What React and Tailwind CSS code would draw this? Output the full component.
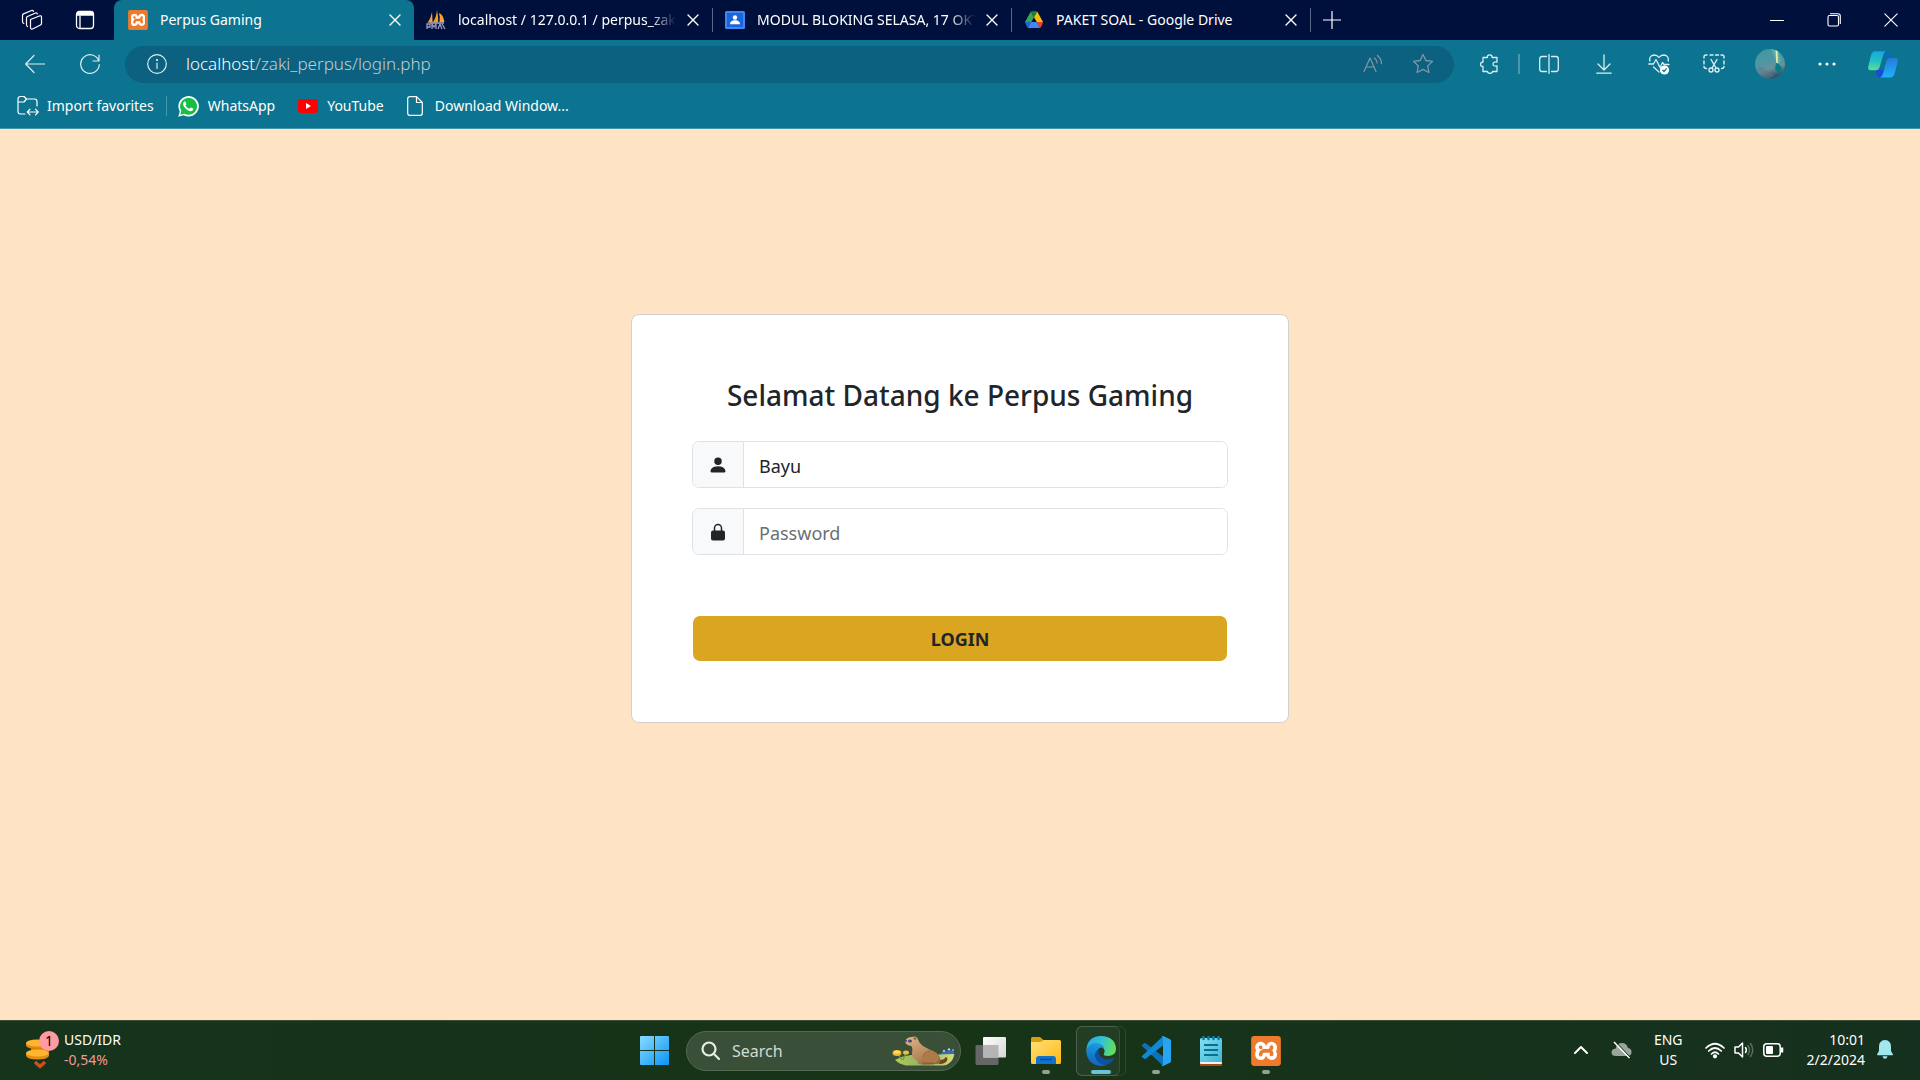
import React from 'react';
import { SiXampp } from 'react-icons/si';
import { BsPersonFill } from 'react-icons/bs';

function Line({ size = 20, w = 1, box = 20, children, className = '' }) {
  return (
    <svg
      width={size}
      height={size}
      viewBox={`0 0 ${box} ${box}`}
      fill="none"
      stroke="currentColor"
      strokeWidth={w}
      strokeLinecap="round"
      strokeLinejoin="round"
      className={className}
      aria-hidden="true"
    >
      {children}
    </svg>
  );
}

function XamppLogo({ small }) {
  return (
    <span className={small ? 'relative block size-5' : 'relative block size-[30px]'}>
      <span className="absolute inset-[3px] bg-white" />
      <SiXampp className="relative size-full text-[#ee7a2b]" />
    </span>
  );
}

function PmaLogo() {
  return (
    <svg width="20" height="20" viewBox="0 0 20 20" aria-hidden="true">
      <path d="M6 2 L6.600 12 L1.500 13 Q5 8 6 2Z" fill="#f7a23c" />
      <path d="M11 0 Q12.500 7 12.200 12.500 L6.500 13 Q10.500 7 11 0Z" fill="#f89c0e" />
      <path d="M13 3 Q17 4 18.500 12 L13.500 12.500 Q14.500 7 13 3Z" fill="#f7a23c" />
      <path d="M1 19v-5h3v3H1M6 19v-5l2 3 2-3v5M12 19l2-5 2 5M16 14l3 5M4 13h14" stroke="#9a9cc4" strokeWidth="1.300" fill="none" />
    </svg>
  );
}

function ClassroomLogo() {
  return (
    <svg width="20" height="18" viewBox="0 0 20 18" aria-hidden="true">
      <rect width="20" height="18" rx="1.500" fill="#4285f4" />
      <rect x="2" y="2" width="16" height="14" fill="#1a66d8" />
      <circle cx="10" cy="6.500" r="2.200" fill="#fff" />
      <path d="M5 13.300c0-3 2.500-4 5-4s5 1 5 4z" fill="#fff" />
    </svg>
  );
}

function DriveLogo() {
  return (
    <svg width="20" height="18" viewBox="0 0 20 18" aria-hidden="true">
      <path d="M6.800 0.600 L10 6.200 L4.200 16.500 L1 11Z" fill="#34a853" />
      <path d="M6.800 0.600 Q10 -0.500 13.200 0.600 L10 6.200Z" fill="#188038" />
      <path d="M13.200 0.600 L19 11 H12.800 L10 6.200Z" fill="#fbbc04" />
      <path d="M1 11 H7.200 L4 17 Q2 15 1 11Z" fill="#1967d2" />
      <path d="M7.200 11 H12.800 L16 17 H4Z" fill="#4285f4" />
      <path d="M12.800 11 H19 Q18 15 16 17Z" fill="#ea4335" />
    </svg>
  );
}

function CloseX() {
  return (
    <Line size={12} box={12} w={1.4}>
      <path d="M1 1l10 10M11 1L1 11" />
    </Line>
  );
}

function Tab({ icon, title, active, fade }) {
  return (
    <div
      role="tab"
      aria-selected={!!active}
      className={
        active
          ? 'flex h-full w-[300px] items-center rounded-t-lg bg-[#0c7490] pl-[14px] pr-3'
          : 'relative flex h-full w-[299px] items-center pl-3 pr-[13px] after:absolute after:right-0 after:top-2 after:h-6 after:w-px after:bg-[#5a6488]'
      }
    >
      <span className="flex w-5 shrink-0 justify-center">{icon}</span>
      <span
        className={
          fade
            ? 'ml-3 flex-1 overflow-hidden whitespace-nowrap [mask-image:linear-gradient(to_right,black_88%,transparent)]'
            : 'ml-3 flex-1 overflow-hidden whitespace-nowrap'
        }
      >
        {title}
      </span>
      <button aria-label={`Close ${title}`} className="ml-1 flex h-6 w-5 shrink-0 items-center justify-end pr-px">
        <CloseX />
      </button>
    </div>
  );
}

function Tool({ label, wide, children }) {
  return (
    <button
      aria-label={label}
      className={
        wide
          ? 'flex h-9 w-[58px] shrink-0 items-center justify-center'
          : 'flex h-9 w-[55px] shrink-0 items-center justify-center'
      }
    >
      {children}
    </button>
  );
}

function TitleBar() {
  return (
    <div className="flex h-10 items-stretch bg-[#00103d] text-sm text-white">
      <div className="flex w-[114px] shrink-0 items-center">
        <button aria-label="Workspaces" className="ml-[21px]">
          <Line size={22} box={22} w={1.2}>
            <path d="M9.500 10.500 L19 6.800 Q20.500 6.500 20.500 8 V14.500 Q20.500 15.500 19.500 16 L11.500 20 Q9.800 20.500 9.500 19Z" />
            <path d="M6.500 17.500 Q5.500 17 5.500 15.500 V9 Q5.500 8 6.500 7.500 L14.500 4 Q16 3.600 16.300 5" />
            <path d="M2.800 14.500 Q1.500 14 1.500 12.500 V6.500 Q1.500 5.300 2.500 4.900 L10.500 1.500 Q12 1.100 12.500 2.300" />
          </Line>
        </button>
        <button aria-label="Tab actions" className="ml-8">
          <Line size={20} w={1.300}>
            <rect x="1.500" y="1.500" width="17" height="17" rx="3" />
            <path d="M2 5V3.500Q2 2 3.500 2h13Q18 2 18 3.500V5z" fill="currentColor" />
            <path d="M5 6v12" />
          </Line>
        </button>
      </div>
      <div role="tablist" className="flex">
        <Tab active icon={<XamppLogo small />} title="Perpus Gaming" />
        <Tab fade icon={<PmaLogo />} title="localhost / 127.0.0.1 / perpus_zaki" />
        <Tab fade icon={<ClassroomLogo />} title="MODUL BLOKING SELASA, 17 OKTOBER" />
        <Tab icon={<DriveLogo />} title="PAKET SOAL - Google Drive" />
      </div>
      <button aria-label="New tab" className="ml-3">
        <Line size={18} box={18} w={1.200}>
          <path d="M9 0.500v17M0.500 9h17" />
        </Line>
      </button>
      <div className="ml-auto flex">
        <button aria-label="Minimize" className="flex w-[57px] items-center justify-center">
          <Line size={14} box={14} w={1}>
            <path d="M0.500 7.500h13" />
          </Line>
        </button>
        <button aria-label="Restore" className="flex w-[57px] items-center justify-center">
          <Line size={14} box={14} w={1.100}>
            <rect x="1" y="2.500" width="10.500" height="10.500" rx="1.500" />
            <path d="M3.500 0.700h7.500q2.300 0 2.300 2.300v7.500" />
          </Line>
        </button>
        <button aria-label="Close window" className="flex w-[58px] items-center justify-center">
          <Line size={14} box={14} w={1.100}>
            <path d="M0.800 0.800l12.400 12.400M13.200 0.800L0.800 13.200" />
          </Line>
        </button>
      </div>
    </div>
  );
}

function CopilotLogo() {
  return (
    <svg width="30" height="27" viewBox="0 0 30 27" aria-hidden="true">
      <defs>
        <linearGradient id="cpA" x1="0.300" y1="0" x2="0.200" y2="1">
          <stop offset="0" stopColor="#15a9dc" />
          <stop offset="0.500" stopColor="#22c2c4" />
          <stop offset="1" stopColor="#62dc93" />
        </linearGradient>
        <linearGradient id="cpB" x1="0.600" y1="0" x2="0.600" y2="1">
          <stop offset="0" stopColor="#2a79dd" />
          <stop offset="1" stopColor="#1cb2fb" />
        </linearGradient>
      </defs>
      <path d="M8 0.300h10.500q2.500 0 3.300 3l1 4h-6z" fill="#0b6cb3" />
      <path d="M8 19h8l-3 7.500h-1.500q-2.300 0-2.900-3z" fill="#1d49d8" />
      <path d="M7.500 0.300h10.500q-2 0.700-2.900 4l-3.400 11.500q-1 3.500-4.200 3.500H3q-3.500 0-2.700-4L3 4.500Q4 0.300 7.500 0.300z" fill="url(#cpA)" />
      <path d="M22.500 7H27q3.500 0 2.700 4l-3 11q-1.100 4.500-4.600 4.500H12q2.300-0.700 3.100-4l3.200-12q1-3.500 4.200-3.500z" fill="url(#cpB)" />
    </svg>
  );
}

function Toolbar() {
  return (
    <div className="flex h-12 items-center px-2 text-[#dcedf2]">
      <button aria-label="Back" className="flex h-9 w-[54px] items-center justify-center">
        <Line w={1.200}>
          <path d="M19.500 10H0.700M9 1.500L0.700 10 9 18.500" />
        </Line>
      </button>
      <button aria-label="Refresh" className="flex h-9 w-14 items-center justify-center">
        <Line w={1.200}>
          <path d="M18.800 7A9.300 9.300 0 1 0 19.300 10.500M19 1v6h-6" />
        </Line>
      </button>
      <div className="ml-[7px] flex h-[37px] flex-1 items-center rounded-full bg-[#0b617f] pr-5 pl-[22px]">
        <Line w={1.200}>
          <circle cx="10" cy="10" r="9.300" />
          <path d="M10 9v5.500" />
          <circle cx="10" cy="6" r="0.500" fill="currentColor" />
        </Line>
        <div className="ml-[19px] flex-1 text-[17px] font-light text-[#c5cdd2]">
          <span className="text-white">localhost</span>/zaki_perpus/login.php
        </div>
        <button aria-label="Read aloud" className="mr-[29px] text-[#8199a3]">
          <Line size={20} w={1.200}>
            <path d="M1 17.500L7 4 13 17.500M3.200 13h7.600M11.500 4q2.500 2 2.500 5M14.500 1.500q4 3.500 4 8" />
          </Line>
        </button>
        <button aria-label="Add to favorites" className="text-[#8199a3]">
          <Line size={22} box={22} w={1.300}>
            <path d="M11 1.500l2.900 6 6.600 0.900-4.800 4.600 1.200 6.500L11 16.400l-5.900 3.100 1.200-6.500L1.500 8.400l6.600-0.900z" />
          </Line>
        </button>
      </div>
      <div className="ml-2 flex items-center">
        <Tool label="Extensions">
          <Line w={1.300}>
            <path d="M3 3.500H7.500Q7 0.800 9.700 0.800T12 3.500H17V8Q13 7.500 13 10T17 12V17.500H12.500Q12.500 19.300 10 19.300T7.500 17.500H3V12.500Q0.500 12.500 0.500 10.300T3 8z" />
          </Line>
        </Tool>
        <span className="mx-px h-5 w-0.5 bg-[#4a98ad]" />
        <Tool label="Split screen">
          <Line w={1.300}>
            <path d="M7.500 2.500H3Q0.700 2.500 0.700 5v10q0 2.500 2.300 2.500h4.500M12.500 2.500H17q2.300 0 2.300 2.500v10q0 2.500-2.300 2.500h-4.500M10 0.500v19" />
          </Line>
        </Tool>
        <Tool label="Downloads">
          <Line w={1.300}>
            <path d="M10 0.800v15M4 10l6 6 6-6M2.800 19.200h14.400" />
          </Line>
        </Tool>
        <Tool label="Browser essentials">
          <Line size={22} box={22} w={1.300}>
            <path d="M1.800 8Q1 2.500 6 2q3.300 0 5 2.500Q12.700 2 16 2q5 0.500 4.200 6M0.800 11h4.700l2.500-4.500 4 8 2.500-5 1.500 2H21M5.500 14l5.500 5" />
            <circle cx="16.500" cy="17" r="4.600" fill="#fff" stroke="none" />
            <path d="M14.800 17.300l1.200 1.200 2.300-2.700" stroke="#0c7490" />
          </Line>
        </Tool>
        <Tool label="Screenshot">
          <Line size={22} box={22} w={1.400}>
            <path d="M1 5V4q0-2 2-2h1M7 2h3M12.500 2h3M18 2h1q2 0 2 2v1M1 8v3M21 8v3M1 13.500q0 2 2.500 2M21 13.500q0 2-2.500 2" />
            <path d="M8 6.500l5 8.500M14 6.500L9 15" />
            <circle cx="8" cy="17" r="2" />
            <circle cx="14" cy="17" r="2" />
          </Line>
        </Tool>
        <Tool label="Profile" wide>
          <svg width="30" height="30" viewBox="0 0 30 30" aria-hidden="true">
            <defs>
              <linearGradient id="av" x1="0" y1="0" x2="0.300" y2="1">
                <stop offset="0" stopColor="#3f98a3" />
                <stop offset="0.500" stopColor="#4d97a2" />
                <stop offset="0.750" stopColor="#6b8f9b" />
                <stop offset="1" stopColor="#35566a" />
              </linearGradient>
              <clipPath id="avc"><circle cx="15" cy="15" r="15" /></clipPath>
            </defs>
            <g clipPath="url(#avc)">
              <rect width="30" height="30" fill="url(#av)" />
              <path d="M16 0h7l3 12-3 4z" fill="#6fb8ae" opacity="0.600" />
              <path d="M20.500 0l0.800 14h1.500L22.500 0z" fill="#e6f3ac" />
              <path d="M21 14q5 1 6 6l-3 5-4-5z" fill="#0c7a86" />
              <path d="M2 19q6-3 10 2t8 5l-8 5H2z" fill="#587c8c" opacity="0.500" />
            </g>
          </svg>
        </Tool>
        <Tool label="Settings and more">
          <svg width="18" height="4" viewBox="0 0 18 4" fill="#fff" aria-hidden="true">
            <circle cx="2" cy="2" r="1.600" />
            <circle cx="9" cy="2" r="1.600" />
            <circle cx="16" cy="2" r="1.600" />
          </svg>
        </Tool>
        <Tool label="Copilot" wide>
          <CopilotLogo />
        </Tool>
      </div>
    </div>
  );
}

function Favorites() {
  return (
    <nav className="flex h-[41px] items-center border-b border-[#4395aa] pb-1 pl-[17px] text-sm text-white">
      <a href="#import" className="flex items-center gap-2">
        <Line size={22} box={22} w={1.200}>
          <path d="M8 19H3.500Q1 19 1 16.500V4Q1 1.500 3.500 1.500H7L9.500 4H17.500Q20 4 20 6.500V11M1 7h6l2.500-3" />
          <path d="M10.500 17h10.500M13 14.200L10.300 17l2.700 2.800M18.500 14.200L21.200 17l-2.700 2.800" />
        </Line>
        Import favorites
      </a>
      <span className="mr-[11px] ml-3 h-5 w-px bg-[#4a98ad]" />
      <a href="#whatsapp" className="flex items-center gap-[9px]">
        <svg width="21" height="21" viewBox="0 0 24 24" aria-hidden="true">
          <path d="M0.300 23.700l1.700-6.100A11.700 11.700 0 1 1 6.500 22z" fill="#fff" />
          <path d="M2.600 21.400l1.200-4.500A9.700 9.700 0 1 1 7.200 20.200z" fill="#16bf44" />
          <path d="M17 14.200c-.3-.2-1.800-.9-2-1-.3-.1-.5-.1-.7.200-.2.300-.8 1-.9 1.100-.2.200-.4.200-.6.100-1.700-.8-3.100-1.900-4.100-3.600-.1-.3 0-.5.100-.6l.7-.8c.1-.2.100-.4 0-.6l-.9-2.100c-.2-.5-.5-.5-.7-.5-.6 0-1 .1-1.300.5-1.600 1.800-.7 4 .4 5.500 1.900 2.800 4 4.200 6.700 4.900 1.500.4 3-.2 3.700-1.500.2-.5.300-1.300-.4-1.600z" fill="#fff" />
        </svg>
        WhatsApp
      </a>
      <a href="#youtube" className="ml-[23px] flex items-center gap-[9px]">
        <svg width="20" height="14" viewBox="0 0 20 14" aria-hidden="true">
          <rect width="20" height="14" rx="3" fill="#f00" />
          <path d="M8 4l5 3-5 3z" fill="#fff" />
        </svg>
        YouTube
      </a>
      <a href="#download" className="ml-[23px] flex items-center gap-3">
        <svg width="16" height="20" viewBox="0 0 16 20" fill="none" stroke="#fff" strokeWidth="1.200" strokeLinejoin="round" aria-hidden="true">
          <path d="M3 0.700H9.500L15.300 6.500V17.300Q15.300 19.300 13.300 19.300H2.700Q0.700 19.300 0.700 17.300V2.700Q0.700 0.700 3 0.700zM9.500 0.700V6.500H15.300" />
        </svg>
        Download Window...
      </a>
    </nav>
  );
}

function LockIcon() {
  return (
    <svg width="14" height="18" viewBox="0 0 14 18" aria-hidden="true">
      <path d="M3.500 9V5a3.500 3.500 0 0 1 7 0v4" fill="none" stroke="currentColor" strokeWidth="1.500" />
      <rect width="14" height="10" y="7.500" rx="2" fill="currentColor" />
    </svg>
  );
}

function Field({ id, label, icon, type, defaultValue }) {
  return (
    <div className="flex h-[47px] rounded-[7px] border border-[#dee2e6]">
      <label
        htmlFor={id}
        aria-label={label}
        className="flex w-[51px] items-center justify-center rounded-l-[6px] border-r border-[#dee2e6] bg-[#f8f9fa] text-[#212529]"
      >
        {icon}
      </label>
      <input
        id={id}
        type={type}
        defaultValue={defaultValue}
        placeholder={label}
        className="min-w-0 flex-1 rounded-r-[6px] bg-white px-[15px] pt-0.5 text-lg text-[#212529] outline-none placeholder:text-[#6b6f74]"
      />
    </div>
  );
}

function LoginPage() {
  return (
    <main className="flex flex-1 flex-col items-center bg-[#fee4c4] pt-[185px]">
      <form
        onSubmit={(e) => e.preventDefault()}
        className="w-full max-w-[658px] rounded-lg border border-[#d0d0d0] bg-white px-[60px] pt-[62px] pb-[61px]"
      >
        <h1 className="mb-7 text-center text-[28px] leading-9 font-medium text-[#212529]">
          Selamat Datang ke Perpus Gaming
        </h1>
        <div className="flex flex-col gap-5">
          <Field id="username" label="Username" type="text" defaultValue="Bayu" icon={<BsPersonFill className="size-5" />} />
          <Field id="password" label="Password" type="password" icon={<LockIcon />} />
        </div>
        <div className="mt-[61px] px-px">
          <button type="submit" className="block h-[45px] w-full rounded-[7px] bg-[#daa520] text-lg font-bold text-[#212529]">
            LOGIN
          </button>
        </div>
      </form>
    </main>
  );
}

function Marmot() {
  return (
    <svg width="64" height="30" viewBox="0 0 64 30" aria-hidden="true">
      <defs>
        <linearGradient id="fur" x1="0.200" y1="0" x2="0.800" y2="1">
          <stop offset="0" stopColor="#d9b086" />
          <stop offset="0.600" stopColor="#b98a5a" />
          <stop offset="1" stopColor="#96683f" />
        </linearGradient>
        <linearGradient id="hill" x1="0" y1="0" x2="1" y2="0">
          <stop offset="0" stopColor="#b5c95a" />
          <stop offset="0.500" stopColor="#86b565" />
          <stop offset="1" stopColor="#d8de72" />
        </linearGradient>
      </defs>
      <path d="M47 20l5-6 2 2 3-4 2 3 2-2 2 7z" fill="#3a6cb4" />
      <path d="M50.500 15.500l1.500-2 1.500 2zM55.500 14l1.500-2 1.500 2zM60 14.500l1-1.500 1 1.500z" fill="#e4edf6" />
      <path d="M3 24q10-6 28-5l31-1q0 6-6 10-2 1.500-8 1.500H14Q7 28 3 24z" fill="url(#hill)" />
      <path d="M6 18l4 6M14 17l-3 7" stroke="#6f9c3f" strokeWidth="1.200" />
      <ellipse cx="5" cy="17" rx="4.500" ry="3" fill="#f1b62a" />
      <ellipse cx="5" cy="16" rx="3.200" ry="1.600" fill="#ffe066" />
      <ellipse cx="14" cy="16.500" rx="3" ry="2" fill="#f2c133" />
      <path d="M47 24q6 0 6.500-3l2 1q0 6-8.500 6z" fill="#6e4326" />
      <path d="M13 5Q15 1 20 1q5-1.500 6 2.500 1 3.500 5 6.500 5 3 10 5 7 3 7.500 9 0 3.500-3 4H27q-2-0.500-1-2.500l-3-2q-3-2-3-6.500 1-4-0.500-7Q13.500 9.500 13 5z" fill="url(#fur)" />
      <ellipse cx="38.500" cy="22" rx="8" ry="6" fill="#ad7a49" />
      <path d="M31 21q1-6 8-6" stroke="#94653b" strokeWidth="1" fill="none" />
      <path d="M29 28.500h13q1-1.500-1-2h-9z" fill="#8f5c34" />
      <ellipse cx="18" cy="5" rx="2" ry="1.500" fill="#4b4580" />
      <path d="M12.500 4.500l2-0.800 1 1.800-2 0.600z" fill="#4b4580" />
      <ellipse cx="23" cy="2.500" rx="1.500" ry="1.200" fill="#8f6038" />
    </svg>
  );
}

function TaskButton({ label, indicator, active, children }) {
  return (
    <button aria-label={label} className="relative flex h-full w-[55px] items-center justify-center">
      {active && (
        <>
          <span className="absolute top-[5px] left-[3px] h-[50px] w-[50px] rounded-md border border-white/10" />
          <span className="absolute top-[5px] left-[3px] h-[50px] w-[44px] rounded-md border border-white/10 bg-white/5" />
        </>
      )}
      <span className="relative">{children}</span>
      {indicator && (
        <span
          className={
            active
              ? 'absolute bottom-[6px] h-1 w-5 rounded-full bg-[#6bc3d8]'
              : 'absolute bottom-[6px] h-1 w-2 rounded-full bg-[#94a294]'
          }
        />
      )}
    </button>
  );
}

function EdgeLogo() {
  return (
    <svg width="30" height="30" viewBox="0 0 30 30" aria-hidden="true">
      <defs>
        <linearGradient id="eA" x1="0" y1="0.300" x2="1" y2="0.500">
          <stop offset="0" stopColor="#2aa5e6" />
          <stop offset="0.500" stopColor="#33c3d8" />
          <stop offset="1" stopColor="#66e052" />
        </linearGradient>
        <linearGradient id="eB" x1="0.500" y1="0" x2="0.300" y2="1">
          <stop offset="0" stopColor="#1b9be0" />
          <stop offset="1" stopColor="#0f62bb" />
        </linearGradient>
      </defs>
      <path d="M0.300 14Q1.500 0 15 0q14 0.500 15 12.500 0 7-7.500 7.500-6 0-4.500-2.500Q20 14 16 11 8 6 0.300 14z" fill="url(#eA)" />
      <path d="M0.200 14.500Q3 7 10 7q6 0 8.500 5Q12 10 11 17q0 9 9 12.200Q17 30 15 30 1 29 0.200 14.500z" fill="url(#eB)" />
      <path d="M12.500 13.500Q6.500 17 10.500 24q3.500 5 9.500 5.200 5-1.700 8-6 0.500-1.500-1-1-8 3-12.500-2-2.500-3.500-2-6.700z" fill="#10509f" />
    </svg>
  );
}

function Taskbar() {
  return (
    <footer className="grid h-[60px] shrink-0 grid-cols-[1fr_auto_1fr] border-t border-[#3d5138] bg-linear-to-r from-[#16331c] via-[#173417] to-[#16301f] text-sm text-white">
      <button className="flex items-center pb-0.5 pl-[25px] text-left leading-5">
        <span className="relative mr-[5px] block h-9 w-[34px]">
          <svg width="34" height="38" viewBox="0 0 34 38" aria-hidden="true">
            <path d="M1 11v3q2 3 11 3t11-3v-3z" fill="#e08913" />
            <ellipse cx="12" cy="11" rx="11" ry="3.500" fill="#ffb52e" />
            <path d="M6 16v4q3 2 9 2t9-2v-4z" fill="#d9820f" />
            <path d="M1 21v3q2 3.500 11.500 3.500T24 24v-3z" fill="#e58e15" />
            <ellipse cx="12.500" cy="21" rx="11.500" ry="3.500" fill="#ffb52e" />
            <path d="M10 30l5 4.500 5-4.500" fill="none" stroke="#d0501d" strokeWidth="3.500" />
          </svg>
          <span className="absolute -top-px left-[14px] flex size-5 items-center justify-center rounded-full bg-[#ff99a4] text-sm text-black">1</span>
        </span>
        <span>
          <span className="block">USD/IDR</span>
          <span className="block text-[#f0979c]">-0,54%</span>
        </span>
      </button>

      <div className="flex items-center">
        <TaskButton label="Start">
          <svg width="29" height="29" viewBox="0 0 29 29" aria-hidden="true">
            <defs>
              <linearGradient id="win" x1="0" y1="0" x2="1" y2="1">
                <stop offset="0" stopColor="#86dcff" />
                <stop offset="1" stopColor="#0a94f7" />
              </linearGradient>
            </defs>
            <path d="M1 0h13v14H0V1q0-1 1-1zM15 0h13q1 0 1 1v13H15zM0 15h14v14H1q-1 0-1-1zM15 15h14v13q0 1-1 1H15z" fill="url(#win)" />
          </svg>
        </TaskButton>
        <label className="mr-0.5 ml-1 flex h-10 w-[275px] items-center rounded-full border border-[#566851] bg-[#3a4f38] pr-1 pl-[14px]">
          <Line size={19} box={19} w={2.200} className="shrink-0 text-[#e8ece8]">
            <circle cx="8" cy="8" r="6.500" />
            <path d="M13 13l5 5" />
          </Line>
          <input
            type="text"
            placeholder="Search"
            aria-label="Search"
            className="ml-3 min-w-0 flex-1 bg-transparent text-base outline-none placeholder:text-[#d3dad2]"
          />
          <Marmot />
        </label>
        <TaskButton label="Task view">
          <svg width="31" height="28" viewBox="0 0 31 28" aria-hidden="true">
            <defs>
              <linearGradient id="tv" x1="0" y1="0" x2="1" y2="1">
                <stop offset="0" stopColor="#fff" />
                <stop offset="1" stopColor="#d5d5d5" />
              </linearGradient>
            </defs>
            <rect x="0.500" y="8" width="23" height="20" rx="1.500" fill="#666" />
            <rect x="8" y="0" width="23" height="20.500" rx="1" fill="url(#tv)" />
            <rect x="8" y="8" width="15.500" height="12.500" fill="#b5b5b5" />
          </svg>
        </TaskButton>
        <TaskButton label="File Explorer" indicator>
          <svg width="30" height="27" viewBox="0 0 30 27" aria-hidden="true">
            <defs>
              <linearGradient id="fo" x1="0" y1="0" x2="1" y2="1">
                <stop offset="0" stopColor="#ffe07a" />
                <stop offset="1" stopColor="#fdb913" />
              </linearGradient>
            </defs>
            <path d="M0 1.500Q0 0 1.500 0H9l3.500 3H28v8H0z" fill="#dd9c07" />
            <path d="M0 5h9.500L13 3h15.500Q30 3 30 4.500v21q0 1.500-1.500 1.500h-27Q0 27 0 25.500z" fill="url(#fo)" />
            <path d="M5 27v-5q0-3 3-3h14q3 0 3 3v5z" fill="#1273cf" />
            <path d="M9 22.500h12" stroke="#0b4d99" strokeWidth="1.500" />
          </svg>
        </TaskButton>
        <TaskButton label="Microsoft Edge" indicator active>
          <EdgeLogo />
        </TaskButton>
        <TaskButton label="Visual Studio Code" indicator>
          <svg width="30" height="30" viewBox="0 0 30 30" aria-hidden="true">
            <path d="M0.500 9.500L3 7.300q0.800-0.600 1.700 0L22 20.500v9.200z" fill="#0b72bd" />
            <path d="M0.500 20.500L3 22.700q0.800 0.600 1.700 0L22 9.500V0.300z" fill="#1287d4" />
            <path d="M22 0l7 3.300q1 0.500 1 1.700v20q0 1.200-1 1.700L22 30q-1 0-1.500-1 1.500 0.500 1.500-1.500v-25Q22 0.500 20.500 1 21 0 22 0z" fill="#27a5f3" />
          </svg>
        </TaskButton>
        <TaskButton label="Notepad">
          <svg width="22" height="30" viewBox="0 0 22 30" aria-hidden="true">
            <defs>
              <linearGradient id="np" x1="0" y1="0" x2="1" y2="1">
                <stop offset="0" stopColor="#86e0f2" />
                <stop offset="1" stopColor="#3fb4d6" />
              </linearGradient>
            </defs>
            <path d="M0 25h22v4q0 1-1 1H1q-1 0-1-1z" fill="#a64b18" />
            <path d="M0 25h22v2q0 1-1 1H1q-1 0-1-1z" fill="#f2f2f2" />
            <path d="M0 3.500Q0 2 1.500 2h19Q22 2 22 3.500V26H0z" fill="url(#np)" />
            <path d="M4 9h14M4 14h14M4 19h14" stroke="#0b6f92" strokeWidth="2" />
            <path d="M3.500 1v2M8.500 1v2M13.500 1v2M18.500 1v2" stroke="#0e7da2" strokeWidth="2.600" strokeLinecap="round" />
          </svg>
        </TaskButton>
        <TaskButton label="XAMPP Control Panel" indicator>
          <XamppLogo />
        </TaskButton>
      </div>

      <div className="flex items-center justify-end pr-[27px] pb-0.5">
        <button aria-label="Show hidden icons" className="mr-[23px]">
          <Line size={14} box={14} w={2}>
            <path d="M1 10l6-6 6 6" />
          </Line>
        </button>
        <svg width="21" height="18" viewBox="0 0 21 18" className="mr-[22px]" aria-hidden="true">
          <path d="M5 15Q0.500 15 0.500 11.500 0.500 8 4.500 7.700 6 2 11 2q4.500 0 6 5 3.500 0.500 3.500 4 0 4-4 4z" fill="#9aa69c" />
          <path d="M3 1l15.500 16" stroke="#fff" strokeWidth="1.600" />
          <path d="M4.500 0.500l15 16" stroke="#16331c" strokeWidth="1" />
        </svg>
        <button className="mr-[22px] text-center leading-5">
          <span className="block">ENG</span>
          <span className="block">US</span>
        </button>
        <button aria-label="Network, volume and battery" className="mr-[23px] flex items-center gap-[9px]">
          <Line size={20} w={1.700}>
            <path d="M1 8Q10 -0.500 19 8M3.700 11Q10 5 16.300 11M6.500 14Q10 10.500 13.500 14" />
            <circle cx="10" cy="16.300" r="1.300" fill="currentColor" />
          </Line>
          <Line size={20} w={1.500}>
            <path d="M1 7h3.500L8.500 3v14L4.500 13H1zM11.500 7.500q1.800 2.500 0 5" />
            <path d="M14 5.500q3 4.500 0 9M16.500 3.500q4.500 6.500 0 13" stroke="#5a7059" />
          </Line>
          <svg width="21" height="14" viewBox="0 0 21 14" fill="none" aria-hidden="true">
            <rect x="0.800" y="0.800" width="16.400" height="12.400" rx="3" stroke="#fff" strokeWidth="1.500" />
            <rect x="3" y="3" width="7" height="8" rx="1" fill="#fff" />
            <path d="M19 4.500v5" stroke="#fff" strokeWidth="2.500" />
          </svg>
        </button>
        <button className="mr-3 text-right leading-5">
          <span className="block">10:01</span>
          <span className="block">2/2/2024</span>
        </button>
        <svg width="16" height="19" viewBox="0 0 16 19" fill="#a3e7ee" role="img" aria-label="Notifications">
          <path d="M8 0q6 0.500 6 6.500V11l2 3.500q0 0.700-0.700 0.700H0.700Q0 15.200 0 14.500L2 11V6.500Q2 0.500 8 0zM5.500 16.200h5q-0.500 2.500-2.500 2.500t-2.500-2.500z" />
        </svg>
      </div>
    </footer>
  );
}

export default function App() {
  return (
    <div className="flex min-h-screen flex-col font-['Segoe_UI','Noto_Sans',sans-serif]">
      <header className="bg-[#0c7490]">
        <TitleBar />
        <Toolbar />
        <Favorites />
      </header>
      <LoginPage />
      <Taskbar />
    </div>
  );
}
